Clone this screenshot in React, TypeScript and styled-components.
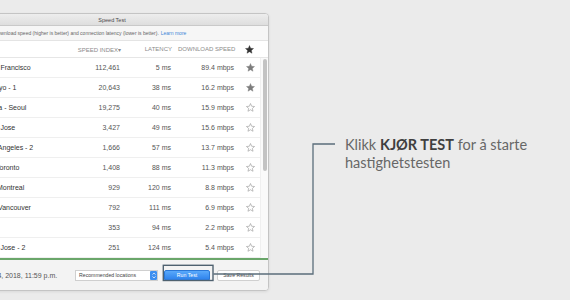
import React from "react";
import styled, { createGlobalStyle } from "styled-components";

const Global = createGlobalStyle`
  html, body { margin: 0; padding: 0; background: #ebebeb; overflow: hidden; }
  body { width: 570px; height: 300px; font-family: "Liberation Sans", Arial, sans-serif; }
`;

const Page = styled.div`
  position: relative;
  width: 570px;
  height: 300px;
  display: flex;
  align-items: flex-start;
  overflow: hidden;
`;

const Window = styled.div`
  flex: none;
  width: 314px;
  margin-left: -45px;
  margin-top: 13px;
  box-sizing: border-box;
  border: 1px solid #c4c4c4;
  border-radius: 4px;
  background: #fff;
  box-shadow: 0 1px 3px rgba(0, 0, 0, 0.08);
  overflow: hidden;
  display: flex;
  flex-direction: column;
`;

const TitleBar = styled.div`
  height: 11px;
  display: flex;
  align-items: center;
  justify-content: center;
  background: linear-gradient(#ededed, #dedede);
  border-bottom: 1px solid #c9c9c9;
  font-size: 5.5px;
  color: #4a4a4a;
`;

const Description = styled.div`
  height: 14px;
  display: flex;
  align-items: center;
  padding-left: 16px;
  background: #f6f6f6;
  border-bottom: 1px solid #e4e4e4;
  font-size: 5px;
  color: #666;
  white-space: nowrap;
`;

const Link = styled.span`
  color: #3d86d6;
  margin-left: 2px;
`;

const Body = styled.div`
  display: flex;
`;

const Table = styled.div`
  flex: 1;
  display: flex;
  flex-direction: column;
`;

const Cols = styled.div<{ $header?: boolean }>`
  display: grid;
  grid-template-columns: 1fr 50px 51px 63px 16px;
  align-items: center;
  padding: 0 ${(p) => (p.$header ? 11 : 2)}px 0 30px;
  height: ${(p) => (p.$header ? 17 : 20)}px;
  box-sizing: border-box;
  border-bottom: 1px solid ${(p) => (p.$header ? "#e6e6e6" : "#efefef")};
  font-size: ${(p) => (p.$header ? 6 : 7)}px;
  color: ${(p) => (p.$header ? "#8a8a8a" : "#555")};
  white-space: nowrap;
`;

const Name = styled.span<{ $indent?: number }>`
  color: #333;
  margin-left: ${(p) => p.$indent || 0}px;
`;

const Num = styled.span<{ $header?: boolean }>`
  text-align: right;
  padding-right: ${(p) => (p.$header ? 6 : 8)}px;
`;

const StarCell = styled.span`
  display: flex;
  justify-content: center;
  align-items: center;
`;

const ScrollTrack = styled.div`
  width: 8px;
  flex: none;
  border-left: 1px solid #f0f0f0;
  background: #fafafa;
  display: flex;
  justify-content: center;
  padding-top: 1px;
  box-sizing: border-box;
`;

const Thumb = styled.div`
  width: 4px;
  height: 112px;
  border-radius: 2px;
  background: #c3c3c3;
`;

const BottomBar = styled.div`
  height: 30px;
  border-top: 2px solid #6aa66a;
  background: #f3f3f3;
  display: flex;
  align-items: center;
  padding: 0 8px 0 27px;
  gap: 5px;
  font-size: 7px;
  color: #555;
`;

const DateText = styled.span`
  margin-right: auto;
  white-space: nowrap;
`;

const Select = styled.div`
  width: 83px;
  height: 11px;
  box-sizing: border-box;
  border: 1px solid #cfcfcf;
  background: #fff;
  display: flex;
  align-items: center;
  justify-content: space-between;
  font-size: 5.2px;
  color: #444;
  padding-left: 3px;
  margin-right: 1px;
`;

const Stepper = styled.span`
  width: 7px;
  height: 9px;
  background: #3d8ff0;
  border-radius: 1px;
  display: flex;
  align-items: center;
  justify-content: center;
`;

const Button = styled.div<{ $primary?: boolean }>`
  height: 11px;
  width: ${(p) => (p.$primary ? 46 : 43)}px;
  box-sizing: border-box;
  display: flex;
  align-items: center;
  justify-content: center;
  font-size: 5.2px;
  border-radius: 2px;
  color: ${(p) => (p.$primary ? "#fff" : "#444")};
  background: ${(p) => (p.$primary ? "linear-gradient(#5aa9fb, #2b80ec)" : "#fff")};
  border: 1px solid ${(p) => (p.$primary ? "#2a78d8" : "#d0d0d0")};
  margin-left: ${(p) => (p.$primary ? 0 : 2)}px;
`;

const Callout = styled.div`
  margin-left: 76px;
  margin-top: 136px;
  font-family: Lato, "Open Sans", sans-serif;
  font-size: 14.5px;
  line-height: 18px;
  color: #676767;
  width: 220px;
`;

const Strong = styled.b`
  color: #3f3f3f;
  font-weight: 700;
`;

const Overlay = styled.svg`
  position: absolute;
  left: 0;
  top: 0;
  pointer-events: none;
`;

const Star = ({ filled, color }: { filled?: boolean; color: string }) => (
  <svg width="9" height="9" viewBox="0 0 10 10">
    <path
      d="M5 0.6 L6.3 3.6 L9.5 3.9 L7.1 6 L7.8 9.2 L5 7.5 L2.2 9.2 L2.9 6 L0.5 3.9 L3.7 3.6 Z"
      fill={filled ? color : "none"}
      stroke={color}
      strokeWidth={filled ? 0.4 : 0.7}
      strokeLinejoin="round"
    />
  </svg>
);

type Row = { name: string; indent?: number; idx: string; lat: string; dl: string; fav?: boolean };

const rows: Row[] = [
  { name: "San Francisco", idx: "112,461", lat: "5 ms", dl: "89.4 mbps", fav: true },
  { name: "Tokyo - 1", indent: 2, idx: "20,643", lat: "38 ms", dl: "16.2 mbps", fav: true },
  { name: "Osaka - Seoul", indent: -4, idx: "19,275", lat: "40 ms", dl: "15.9 mbps" },
  { name: "San Jose", idx: "3,427", lat: "49 ms", dl: "15.6 mbps" },
  { name: "Los Angeles - 2", indent: -1, idx: "1,666", lat: "57 ms", dl: "13.7 mbps" },
  { name: "Toronto", indent: 10, idx: "1,408", lat: "88 ms", dl: "11.3 mbps" },
  { name: "Montreal", indent: 11, idx: "929", lat: "120 ms", dl: "8.8 mbps" },
  { name: "Vancouver", indent: 12, idx: "792", lat: "111 ms", dl: "6.9 mbps" },
  { name: "Rio", idx: "353", lat: "94 ms", dl: "2.2 mbps" },
  { name: "San Jose - 2", idx: "251", lat: "124 ms", dl: "5.4 mbps" },
];

export default function App() {
  return (
    <>
      <Global />
      <Page>
        <Window>
          <TitleBar>Speed Test</TitleBar>
          <Description>
            Sorted by download speed (higher is better) and connection latency (lower is better).
            <Link>Learn more</Link>
          </Description>
          <Cols $header>
            <span />
            <Num $header>SPEED INDEX▾</Num>
            <Num $header>LATENCY</Num>
            <Num $header>DOWNLOAD SPEED</Num>
            <StarCell>
              <Star filled color="#333" />
            </StarCell>
          </Cols>
          <Body>
            <Table>
              {rows.map((r) => (
                <Cols key={r.name}>
                  <Name $indent={r.indent}>{r.name}</Name>
                  <Num>{r.idx}</Num>
                  <Num>{r.lat}</Num>
                  <Num>{r.dl}</Num>
                  <StarCell>
                    <Star filled={r.fav} color={r.fav ? "#7d7d7d" : "#9a9a9a"} />
                  </StarCell>
                </Cols>
              ))}
            </Table>
            <ScrollTrack>
              <Thumb />
            </ScrollTrack>
          </Body>
          <BottomBar>
            <DateText>Dec 4, 2018, 11:59 p.m.</DateText>
            <Select>
              Recommended locations
              <Stepper>
                <svg width="4" height="7" viewBox="0 0 4 7">
                  <path d="M0.5 2.6 L2 1 L3.5 2.6 M0.5 4.4 L2 6 L3.5 4.4" fill="none" stroke="#fff" strokeWidth="0.7" />
                </svg>
              </Stepper>
            </Select>
            <Button $primary>Run Test</Button>
            <Button>Save Results</Button>
          </BottomBar>
        </Window>
        <Callout>
          Klikk <Strong>KJØR TEST</Strong> for å starte hastighetstesten
        </Callout>
        <Overlay width="570" height="300" viewBox="0 0 570 300">
          <polyline points="335,144 313,144 313,274 213.5,274" fill="none" stroke="#5b6e7b" strokeWidth="1.3" />
          <rect x="163.3" y="265.3" width="49.7" height="15.2" fill="none" stroke="#4f6270" strokeWidth="1.4" />
        </Overlay>
      </Page>
    </>
  );
}
